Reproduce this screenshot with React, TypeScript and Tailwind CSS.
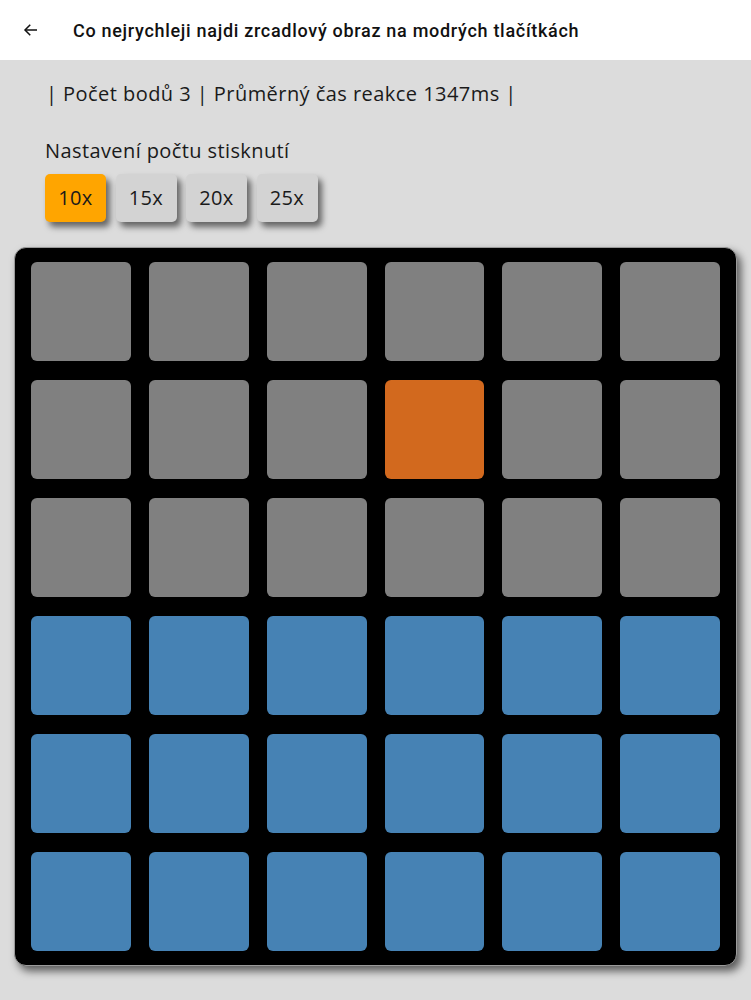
import { useState } from 'react';

const COLS = 6;

// cells: 0 = gray, 1 = orange (selected), 2 = blue
const board: number[][] = [
  [0, 0, 0, 0, 0, 0],
  [0, 0, 0, 1, 0, 0],
  [0, 0, 0, 0, 0, 0],
  [2, 2, 2, 2, 2, 2],
  [2, 2, 2, 2, 2, 2],
  [2, 2, 2, 2, 2, 2],
];

const cellColor = (v: number) =>
  v === 1 ? 'bg-[#d2691e]' : v === 2 ? 'bg-[#4682b4]' : 'bg-[#808080]';

export default function App() {
  const [count, setCount] = useState(10);
  const options = [10, 15, 20, 25];

  return (
    <div className="min-h-screen bg-[#dcdcdc] font-['Open_Sans',sans-serif] text-[#1a1a1a]">
      {/* Top bar */}
      <header className="h-[60px] bg-white flex items-center">
        <button className="w-[60px] h-full flex items-center justify-center pl-[2px] pb-[1px]">
          <svg width="18" height="18" viewBox="0 0 24 24" fill="none" stroke="#111" strokeWidth="2">
            <path d="M20 12H4" />
            <path d="M11 5l-7 7 7 7" />
          </svg>
        </button>
        <h1 className="ml-[13px] text-[18px] font-medium tracking-[0.7px] font-['Roboto',sans-serif] text-[#111]">
          Co nejrychleji najdi zrcadlový obraz na modrých tlačítkách
        </h1>
      </header>

      <main className="px-[14px] pb-8">
        {/* Stats */}
        <div className="pl-[32px] pt-[19px] text-[20px] leading-[30px] tracking-[0.45px]">
          | Počet bodů 3 | Průměrný čas reakce 1347ms |
        </div>

        {/* Settings */}
        <div className="pl-[31px] mt-[28px] text-[20px] leading-[28px] tracking-[0.4px]">
          Nastavení počtu stisknutí
        </div>
        <div className="pl-[31px] mt-[9px] flex gap-[9.5px]">
          {options.map((o) => (
            <button
              key={o}
              onClick={() => setCount(o)}
              className={`w-[61px] h-[48px] rounded-[5px] text-[20px] tracking-[0.3px] shadow-[4px_5px_6px_rgba(0,0,0,0.55)] ${
                count === o ? 'bg-[#ffa500]' : 'bg-[#d3d3d3]'
              }`}
            >
              {o}x
            </button>
          ))}
        </div>

        {/* Board */}
        <div className="mt-[25px] bg-black rounded-[12px] border border-[#9a9a9a] shadow-[4px_5px_8px_rgba(0,0,0,0.6)] px-[16px] pt-[14px] pb-[14px]">
          <div className="grid grid-cols-6 gap-x-[18px] gap-y-[19px]">
            {board.flat().map((v, i) => (
              <div
                key={i}
                data-col={i % COLS}
                className={`h-[99px] rounded-[6px] ${cellColor(v)}`}
              />
            ))}
          </div>
        </div>
      </main>
    </div>
  );
}
